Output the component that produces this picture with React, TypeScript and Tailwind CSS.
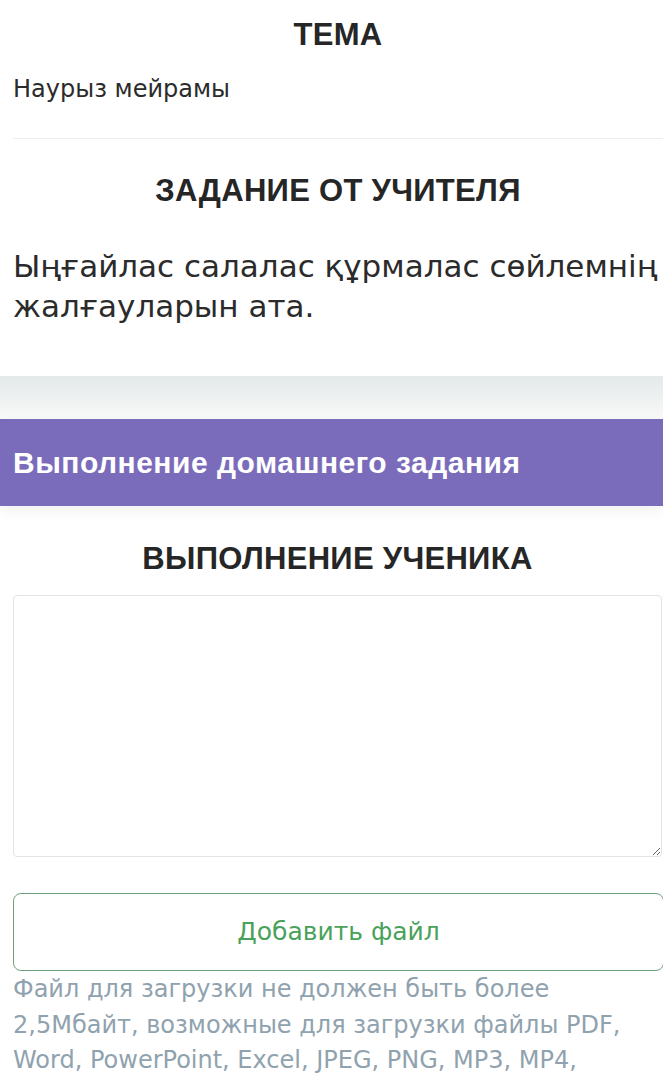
import React from 'react';

const font = { fontFamily: '"Liberation Sans", Arial, sans-serif' };

const App = () => {
    return (
        <div className="w-[663px] overflow-hidden bg-white" style={font}>
            {/* task card */}
            <section className="bg-white pl-[13px]">
                <h2 className="pt-[15px] text-center text-[31px] font-bold leading-[40px] tracking-[0.3px] text-[#262626]">ТЕМА</h2>
                <p className="mt-[19px] font-['DejaVu_Sans',sans-serif] text-[24px] leading-[30px] text-[#2b2b2b]">Наурыз мейрамы</p>
                <div className="mt-[34px] h-px bg-[#eeeeee]" />
                <h2 className="mt-[30px] text-center text-[31px] font-bold leading-[44px] tracking-[0.3px] text-[#262626]">ЗАДАНИЕ ОТ УЧИТЕЛЯ</h2>
                <p className="mt-[33px] w-[662px] pb-[50px] font-['DejaVu_Sans',sans-serif] text-[31px] leading-[40px] text-[#2b2b2b]">
                    Ыңғайлас салалас құрмалас сөйлемнің жалғауларын ата.
                </p>
            </section>

            <div className="h-[43px] bg-gradient-to-b from-[#e4e9e9] to-[#f8f9f9]" />

            <div className="relative z-10 flex h-[87px] items-center bg-[#7b6cbb] pl-[13px] shadow-[0_6px_12px_rgba(0,0,0,0.05)]">
                <h3 className="text-[30px] font-bold tracking-[0.5px] text-white">Выполнение домашнего задания</h3>
            </div>

            <section className="bg-white pl-[13px] pr-px">
                <h2 className="pt-[33px] text-center text-[31px] font-bold leading-[40px] tracking-[0.3px] text-[#262626]">ВЫПОЛНЕНИЕ УЧЕНИКА</h2>
                <textarea className="mt-[16px] block h-[262px] w-full resize-y rounded-[4px] border border-[#e3e3e3] bg-white outline-none" />
                <button className="mt-[36px] flex h-[78px] w-[651px] items-center justify-center rounded-[8px] border border-[#6f9f7c] bg-white font-['DejaVu_Sans',sans-serif] text-[25px] text-[#49a25a]">
                    Добавить файл
                </button>
                <p className="mt-px w-[609px] font-['DejaVu_Sans',sans-serif] text-[24px] leading-[35.5px] text-[#8fa2ae]">
                    Файл для загрузки не должен быть более 2,5Мбайт, возможные для загрузки файлы PDF, Word, PowerPoint, Excel, JPEG, PNG, MP3, MP4, AVI
                </p>
            </section>
        </div>
    );
};

export default App;
